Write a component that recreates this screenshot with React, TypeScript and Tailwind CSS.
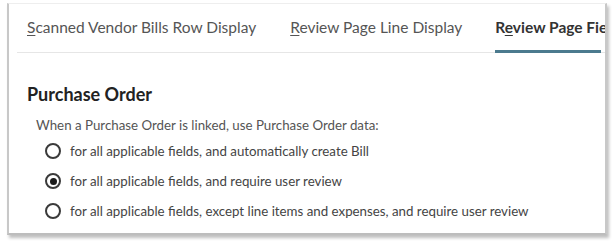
import React from "react";

function Radio({ checked }: { checked?: boolean }) {
  return (
    <span className="flex h-[16px] w-[16px] shrink-0 items-center justify-center rounded-full border-[2px] border-[#3a3a3a] bg-white">
      {checked && <span className="h-[7px] w-[7px] rounded-full bg-[#1a1a1a]" />}
    </span>
  );
}

export default function App() {
  const options = [
    { label: "for all applicable fields, and automatically create Bill", checked: false },
    { label: "for all applicable fields, and require user review", checked: true },
    {
      label: "for all applicable fields, except line items and expenses, and require user review",
      checked: false,
    },
  ];
  return (
    <div className="h-[248px] w-[615px] overflow-hidden bg-white" style={{ fontFamily: "Lato, 'Open Sans', sans-serif" }}>
      <div className="ml-[7px] mt-[3px] h-[232px] w-[600px] overflow-hidden border-x-[2px] border-b-[2px] border-t border-x-[#c8c8c8] border-b-[#bdbdbd] border-t-[#eeeeee] bg-white shadow-[2px_3px_3px_rgba(0,0,0,0.25)]">
        <div className="ml-[8px] flex h-[49px] items-end border-b border-[#e6e6e6]">
          <div className="flex h-[49px] shrink-0 items-center whitespace-nowrap pl-[10px] pr-[34px] text-[15.5px] text-[#555]">
            <span><span className="underline underline-offset-2">S</span>canned Vendor Bills Row Display</span>
          </div>
          <div className="flex h-[49px] shrink-0 items-center whitespace-nowrap pr-[33px] text-[15.5px] text-[#555]">
            <span><span className="underline underline-offset-2">R</span>eview Page Line Display</span>
          </div>
          <div className="relative flex h-[49px] shrink-0 items-center whitespace-nowrap text-[15.5px] font-bold text-[#333]">
            <span>R<span className="underline underline-offset-2">e</span>view Page Fields</span>
            <span className="absolute bottom-[-1px] left-0 h-[3px] w-[106px] bg-[#4b7a8e]" />
          </div>
        </div>
        <div className="pl-[18px] pt-[29px]">
          <div className="text-[18px] font-bold leading-[24px] text-[#222]">Purchase Order</div>
          <div className="mt-[10px] pl-[9px] text-[13.3px] leading-[18px] text-[#555]">
            When a Purchase Order is linked, use Purchase Order data:
          </div>
          <div className="mt-[8px] flex flex-col gap-[12px] pl-[18px]">
            {options.map((o) => (
              <div key={o.label} className="flex items-center gap-[9px] whitespace-nowrap text-[13.3px] leading-[18px] text-[#444]">
                <Radio checked={o.checked} />
                <span>{o.label}</span>
              </div>
            ))}
          </div>
        </div>
      </div>
    </div>
  );
}
